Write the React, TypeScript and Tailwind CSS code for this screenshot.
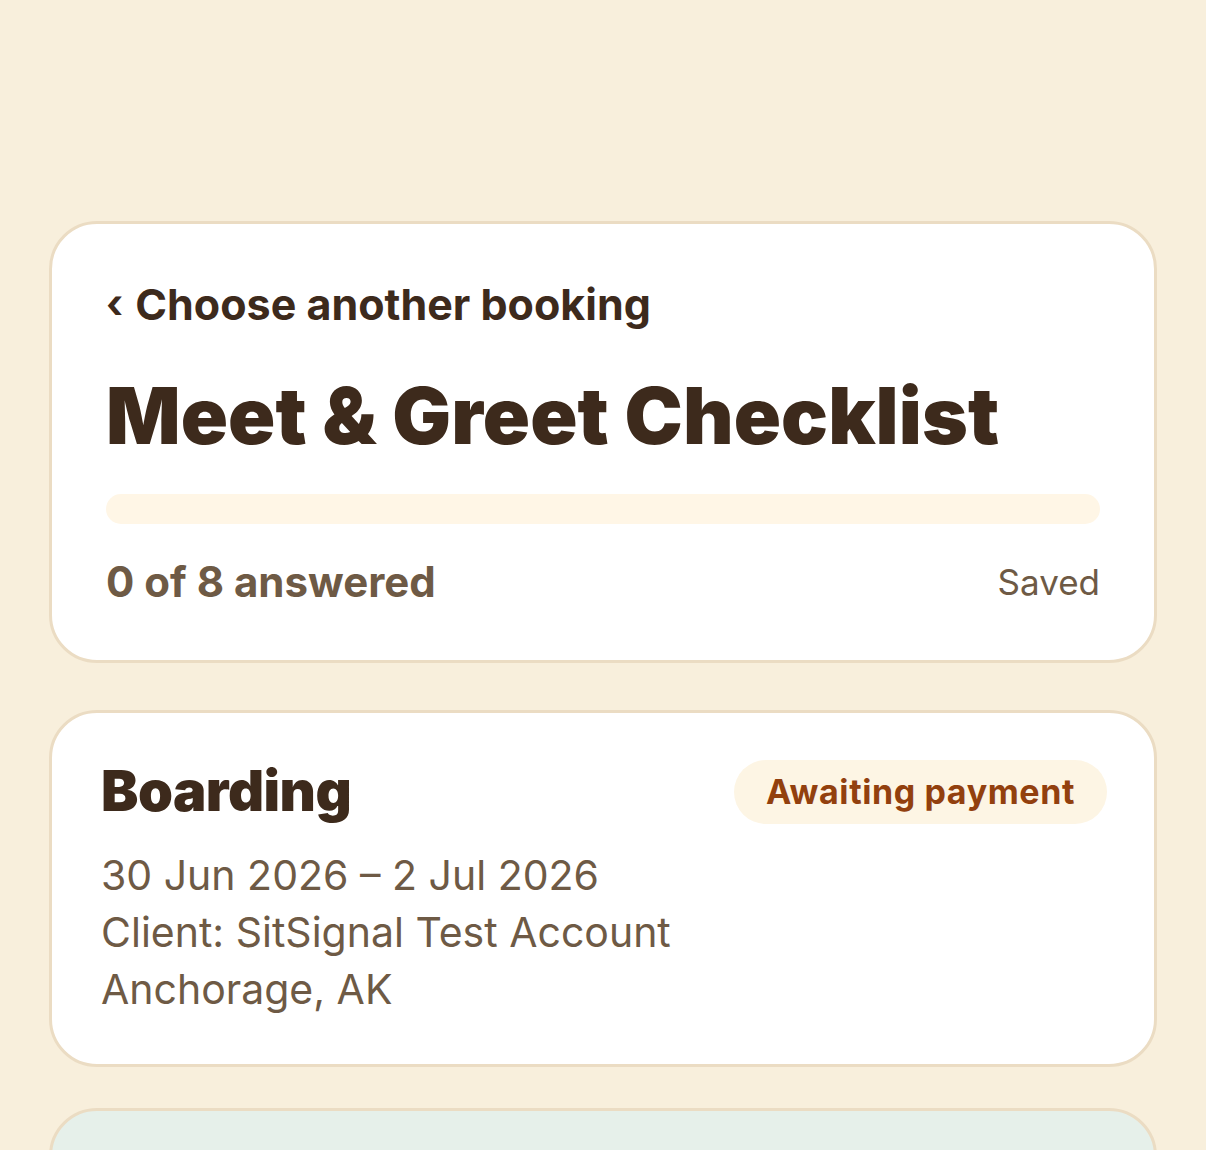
import React from "react";

// Meet & Greet checklist header — booking summary cards on a warm cream page.

const font = { fontFamily: "Inter, 'Noto Sans', sans-serif" };

function HeaderCard() {
  return (
    <section className="rounded-[48px] border-[3px] border-[#ebdcc3] bg-white px-[54px] pt-[52px] pb-[52px]">
      <a className="flex items-center gap-[12px] text-[43px] font-bold leading-[56px] text-[#3d2a1c]">
        <span className="text-[40px]">‹</span>
        <span>Choose another booking</span>
      </a>
      <h1 className="mt-[39px] text-[78px] font-black leading-[90px] tracking-[0.1px] text-[#3d2a1c]">
        Meet &amp; Greet Checklist
      </h1>
      <div className="mt-[33px] h-[30px] rounded-full bg-[#fff6e6]" />
      <div className="mt-[32px] flex items-center justify-between">
        <span className="text-[42px] font-bold leading-[52px] text-[#6e5a45]">0 of 8 answered</span>
        <span className="text-[35px] leading-[52px] text-[#6e5a45]">Saved</span>
      </div>
    </section>
  );
}

function BookingCard() {
  return (
    <section className="rounded-[48px] border-[3px] border-[#ebdcc3] bg-white pl-[49px] pr-[47px] pt-[47px] pb-[46px]">
      <div className="flex items-start justify-between">
        <h2 className="text-[56px] font-black leading-[62px] tracking-[-0.5px] text-[#3d2a1c]">Boarding</h2>
        <span className="rounded-full bg-[#fdf5e4] px-[32px] py-[10px] text-[34px] font-bold leading-[44px] tracking-[0.6px] text-[#92400e]">
          Awaiting payment
        </span>
      </div>
      <div className="mt-[23px] text-[41px] leading-[57px] text-[#6e5a45]">
        <p>30 Jun 2026 – 2 Jul 2026</p>
        <p>Client: SitSignal Test Account</p>
        <p>Anchorage, AK</p>
      </div>
    </section>
  );
}

export default function App() {
  return (
    <div style={font} className="min-h-[1150px] bg-[#f8efdc] px-[49px] pt-[221px]">
      <HeaderCard />
      <div className="mt-[47px]">
        <BookingCard />
      </div>
      <section className="mt-[41px] h-[200px] rounded-[48px] border-[3px] border-[#ebdcc3] bg-[#e6f0ea]" />
    </div>
  );
}
